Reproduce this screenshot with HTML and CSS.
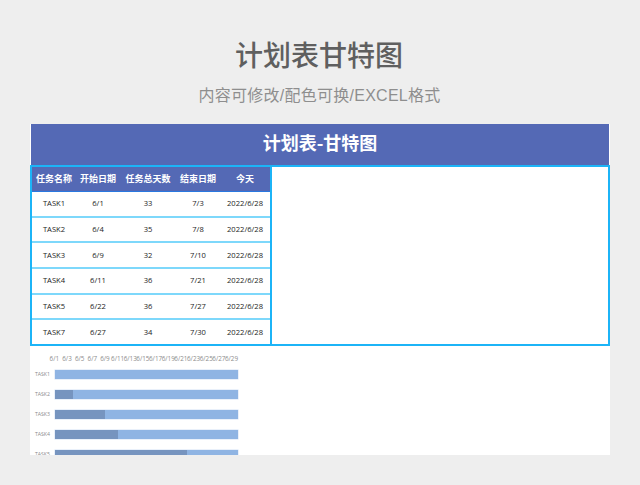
FILE: index.html
```html
<!DOCTYPE html>
<html lang="zh">
<head>
<meta charset="utf-8">
<title>计划表甘特图</title>
<link rel="stylesheet" href="styles.css">
</head>
<body>
<header class="hero">
  <h1 class="hero-title">计划表甘特图</h1>
  <p class="hero-sub">内容可修改/配色可换/EXCEL格式</p>
</header>
<main class="sheet">
  <div class="banner">计划表-甘特图</div>
  <div class="board">
    <div class="table">
      <div class="row head"><span>任务名称</span><span>开始日期</span><span>任务总天数</span><span>结束日期</span><span>今天</span></div>
      <div class="row"><span>TASK1</span><span>6/1</span><span>33</span><span>7/3</span><span>2022/6/28</span></div>
      <div class="row"><span>TASK2</span><span>6/4</span><span>35</span><span>7/8</span><span>2022/6/28</span></div>
      <div class="row"><span>TASK3</span><span>6/9</span><span>32</span><span>7/10</span><span>2022/6/28</span></div>
      <div class="row"><span>TASK4</span><span>6/11</span><span>36</span><span>7/21</span><span>2022/6/28</span></div>
      <div class="row"><span>TASK5</span><span>6/22</span><span>36</span><span>7/27</span><span>2022/6/28</span></div>
      <div class="row"><span>TASK7</span><span>6/27</span><span>34</span><span>7/30</span><span>2022/6/28</span></div>
    </div>
    <div class="panel"></div>
  </div>
  <section class="chart">
    <div class="axis"><span>6/1</span><span>6/3</span><span>6/5</span><span>6/7</span><span>6/9</span><span>6/11</span><span>6/13</span><span>6/15</span><span>6/17</span><span>6/19</span><span>6/21</span><span>6/23</span><span>6/25</span><span>6/27</span><span>6/29</span></div>
    <div class="gantt"><span class="task">TASK1</span><div class="bar"></div></div>
    <div class="gantt"><span class="task">TASK2</span><div class="bar"><div class="done" style="width:18px"></div></div></div>
    <div class="gantt"><span class="task">TASK3</span><div class="bar"><div class="done" style="width:50px"></div></div></div>
    <div class="gantt"><span class="task">TASK4</span><div class="bar"><div class="done" style="width:63px"></div></div></div>
    <div class="gantt"><span class="task">TASK5</span><div class="bar"><div class="done" style="width:132px"></div></div></div>
  </section>
</main>
</body>
</html>
```
FILE: styles.css
```css
* { box-sizing: border-box; }
html, body { margin: 0; padding: 0; }
body {
  width: 640px;
  height: 485px;
  overflow: hidden;
  background: #eeeeee;
  font-family: "Liberation Sans", "Noto Sans CJK SC", sans-serif;
}
.hero { height: 124px; padding-top: 34px; text-align: center; }
.hero-title {
  margin: 0 2px 0 0;
  height: 40px;
  line-height: 40px;
  font-size: 28px;
  font-weight: 500;
  color: #5f5f5f;
  font-family: "Noto Sans CJK SC", sans-serif;
}
.hero-sub {
  margin: 2px 1px 0 0;
  height: 40px;
  line-height: 40px;
  font-size: 16px;
  letter-spacing: 0.26px;
  color: #8e8e8e;
  font-family: "Liberation Sans", "Noto Sans CJK SC", sans-serif;
}
.sheet {
  width: 580px;
  height: 331px;
  margin-left: 30px;
  background: #ffffff;
  overflow: hidden;
}
.banner {
  margin-left: 1px;
  margin-right: 1px;
  height: 41px;
  line-height: 37px;
  text-align: center;
  background: #5469b5;
  color: #ffffff;
  font-size: 18px;
  font-weight: 700;
  font-family: "Noto Sans CJK SC", sans-serif;
}
.board { display: flex; height: 181px; }
.table {
  width: 242px;
  border: 2px solid #1cb4f7;
  display: flex;
  flex-direction: column;
}
.panel {
  flex: 1;
  border: 2px solid #1cb4f7;
  border-left: 0;
}
.row {
  display: grid;
  grid-template-columns: 44px 44px 56px 44px 50px;
  align-items: center;
  flex: 1;
  padding-bottom: 1px;
  text-align: center;
  font-size: 7.6px;
  color: #1c1c1c;
  border-top: 2px solid #7ed8fb;
  font-family: "Open Sans", "Noto Sans CJK SC", sans-serif;
}
.row.head {
  flex: 0 0 25px;
  padding-bottom: 1px;
  border-top: 0;
  background: #5469b5;
  color: #ffffff;
  font-weight: 700;
  font-size: 9px;
  font-family: "Noto Sans CJK SC", sans-serif;
  border-bottom: 1px solid #2a78e0;
}
.row.head + .row { border-top: 0; }
.chart { height: 109px; overflow: hidden; padding-top: 8px; }
.axis {
  display: flex;
  margin-left: 18px;
  width: 195px;
  font-size: 6.3px;
  line-height: 9px;
  color: #8c8c8c;
  font-family: "Open Sans", sans-serif;
}
.axis span {
  flex: 0 0 12.66px;
  min-width: 0;
  display: flex;
  justify-content: center;
  white-space: nowrap;
}
.gantt { display: flex; align-items: center; height: 20px; }
.axis + .gantt { margin-top: 1px; }
.task {
  width: 25px;
  padding-right: 5px;
  flex: none;
  text-align: right;
  font-size: 5.2px;
  color: #8c8c8c;
  font-family: "Open Sans", sans-serif;
}
.bar {
  width: 183px;
  height: 9px;
  background: #8fb4e3;
  box-shadow: 0 0 0 0.5px #d3e2f5;
  display: flex;
}
.done { height: 100%; background: #7694bf; }
```
